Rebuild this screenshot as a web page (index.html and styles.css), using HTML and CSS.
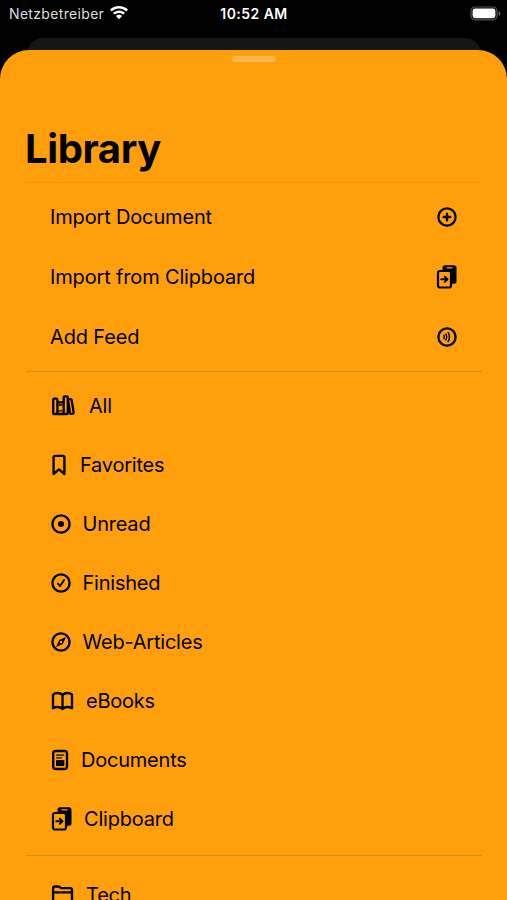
FILE: index.html
```
<!DOCTYPE html>
<html lang="en">
<head>
<meta charset="utf-8">
<title>Library</title>
<link rel="stylesheet" href="styles.css">
</head>
<body>
<svg class="defs" width="0" height="0">
  <symbol id="clip" viewBox="0 0 21 24">
    <rect x="6.500" y=".3" width="14" height="18.400" rx="2.500"/>
    <path d="M11 2.900h5" stroke="#ff9f0c" stroke-width="1.300" stroke-linecap="round"/>
    <rect x="2" y="6" width="13" height="16.500" rx="2" fill="#ff9f0c" stroke="#000" stroke-width="2.200"/>
    <path d="M5.300 14.300h6M8.800 11.700l2.700 2.600-2.700 2.600" class="l18"/>
  </symbol>
</svg>
<header class="status">
  <div class="carrier"><span class="net">Netzbetreiber</span>
    <svg width="18" height="14" viewBox="0 0 18 14" fill="#fff"><path d="M9 0C5.500 0 2.400 1.300 0 3.600l1.700 1.800C3.700 3.500 6.200 2.500 9 2.500s5.300 1 7.300 2.900L18 3.600C15.600 1.300 12.500 0 9 0zM9 4.400c-2.300 0-4.400.9-6 2.400l1.700 1.800C5.900 7.500 7.400 6.900 9 6.900s3.100.6 4.300 1.700L15 6.800c-1.600-1.500-3.700-2.400-6-2.400zM9 8.800c-1.100 0-2.200.5-3 1.200l3 3.200 3-3.200c-.8-.7-1.900-1.200-3-1.200z"/></svg>
  </div>
  <span class="clock">10:52 AM</span>
  <svg class="battery" width="32" height="16" viewBox="0 0 32 16"><rect x="1" y="1" width="26" height="12.800" rx="4" fill="none" stroke="#555" stroke-width="1.200"/><rect x="2.600" y="2.600" width="22.800" height="9.600" rx="2.400" fill="#fff"/><path d="M28.600 5v5q1.800-.8 1.800-2.500T28.600 5z" fill="#666"/></svg>
</header>
<div class="behind"></div>
<main class="sheet">
  <div class="grabber"></div>
  <h1>Library</h1>
  <hr class="faint">
  <ul class="actions">
    <li><span>Import Document</span><svg width="20" height="24" viewBox="0 0 20 24"><circle cx="10" cy="12" r="8.600" class="l2"/><path d="M10 8.700v6.600M6.700 12h6.600" class="l2"/></svg></li>
    <li><span>Import from Clipboard</span><svg width="21" height="24"><use href="#clip"/></svg></li>
    <li><span>Add Feed</span><svg width="20" height="24" viewBox="0 0 20 24"><circle cx="10" cy="12" r="8.600" class="l2"/><path d="M6.900 10.400q.7 1.600 0 3.200M9 9q1.500 3 0 6M11.200 7.500q2.500 4.500 0 9" class="l15"/></svg></li>
  </ul>
  <hr>
  <ul class="menu">
    <li><svg width="26" height="24" viewBox="0 0 26 24"><path d="M2.200 5.700q0-1.100 1.100-1.100h1.800q1.300 0 1.300 1.100V20H3.300q-1.100 0-1.100-1.100zM6.400 8.300h6M6.400 20h6M12.700 3.500q0-1.100 1.100-1.100h1.800q1.200 0 1.200 1.100v15.400q0 1.100-1.200 1.100h-1.800q-1.100 0-1.100-1.100zM17.300 5.400l2.100-.3q1-.2 1.200.8l2 12.500q.2 1-.8 1.200l-1.600.2q-1 .2-1.200-.8L17.300 8" class="l2"/><path d="M7.800 11h3M7.800 16.800h3" class="l13"/></svg><span>All</span></li>
    <li><svg class="mark" width="16" height="24" viewBox="0 0 16 24"><path d="M2.600 21V4.500q0-1.700 1.700-1.700h7.400q1.700 0 1.700 1.700V21L8 16.400z" class="l2"/></svg><span>Favorites</span></li>
    <li class="round"><svg width="20" height="24" viewBox="0 0 20 24"><circle cx="10" cy="12" r="8.600" class="l2"/><circle cx="10" cy="12" r="3"/></svg><span>Unread</span></li>
    <li class="round"><svg width="20" height="24" viewBox="0 0 20 24"><circle cx="10" cy="12" r="8.600" class="l2"/><path d="M6.900 12.600l2.200 2.500 4-6.100" class="l18"/></svg><span>Finished</span></li>
    <li class="round"><svg width="20" height="24" viewBox="0 0 20 24"><circle cx="10" cy="12" r="8.600" class="l2"/><path fill-rule="evenodd" d="M15 7l-3 6.500q-.2.500-.7.700L5 17l3-6.500q.2-.5.700-.7zM10 10.700a1.300 1.300 0 1 0 0 2.600 1.300 1.300 0 0 0 0-2.600z"/></svg><span>Web-Articles</span></li>
    <li class="book"><svg width="23" height="24" viewBox="0 0 23 24"><path d="M11.500 6Q9.800 4 6.700 4T2 5.700v13.500q2-1.200 4.700-1.200t4.800 1.900q2.100-1.900 4.800-1.900t4.700 1.200V5.700Q19.300 4 16.300 4T11.500 6zv13.500" class="l2"/></svg><span>eBooks</span></li>
    <li><svg width="18" height="24" viewBox="0 0 18 24"><rect x="2.200" y="3" width="13.800" height="18" rx="2.400" class="l2"/><path d="M5.700 7.200h7M5.700 9.800h4.800" class="l13"/><rect x="5" y="11.900" width="8.300" height="6.200" rx=".7"/></svg><span>Documents</span></li>
    <li><svg width="21" height="24"><use href="#clip"/></svg><span>Clipboard</span></li>
  </ul>
  <hr>
  <ul class="menu folders">
    <li><svg width="23" height="24" viewBox="0 0 23 24"><path d="M2.100 18V5.500q0-2 2-2h3q.9 0 1.600.6l.6.500q.6.500 1.500.5h8.200q2 0 2 2V18q0 2-2 2H4.100q-2 0-2-2zM2.100 9.400H21" class="l2"/></svg><span>Tech</span></li>
  </ul>
</main>
</body>
</html>
```
FILE: styles.css
```
* { box-sizing: border-box; }
html, body { height: 100%; }
body {
  margin: 0;
  background: #000;
  overflow: hidden;
  font-family: Inter, "Liberation Sans", sans-serif;
  color: #000;
  display: flex;
  flex-direction: column;
}
ul { list-style: none; margin: 0; padding: 0; }
svg { display: block; flex: none; }
.defs { position: absolute; }
.l2, .l18, .l15, .l13 { fill: none; stroke: #000; stroke-linecap: round; stroke-linejoin: round; }
.l2 { stroke-width: 2.350px; }
.l18 { stroke-width: 1.900px; }
.l15 { stroke-width: 1.500px; }
.l13 { stroke-width: 1.300px; }

.status {
  height: 38px;
  flex: none;
  display: grid;
  grid-template-columns: 1fr auto 1fr;
  align-items: start;
  padding: 5px 5px 0 9px;
  color: #fff;
  font-size: 14px;
  line-height: 18px;
}
.carrier { display: flex; gap: 6px; color: #ddd; }
.carrier svg { margin-top: 1px; }
.net { letter-spacing: 0.330px; }
.clock { font-weight: 600; letter-spacing: 0.450px; margin-right: 3px; }
.battery { justify-self: end; margin-top: 1px; }

.behind {
  height: 32px;
  flex: none;
  margin: 0 26px -20px 27px;
  background: #161616;
  border-radius: 16px 16px 0 0;
}
.sheet {
  flex: 1;
  min-height: 0;
  overflow: hidden;
  background: #ff9f0c;
  border-radius: 29px 29px 0 0;
  padding: 0 25px 0 26px;
  position: relative;
}
.grabber {
  width: 44px;
  height: 6px;
  margin: 6px auto 0;
  border-radius: 3px;
  background: #ffb64b;
}
h1 {
  margin: 62px 0 0 -1px;
  height: 58px;
  font-size: 40px;
  line-height: 49px;
  font-weight: 700;
  letter-spacing: -0.400px;
}
hr { border: 0; height: 1px; margin: 0; background: #d58a15; }
.faint { background: #ec9712; margin-right: 2px; }
.actions { padding: 4px 25px 4px 24px; letter-spacing: -0.160px; }
.actions li {
  display: flex;
  align-items: center;
  justify-content: space-between;
  height: 60px;
  font-size: 20px;
}
.menu { padding: 4px 25px 6px; font-size: 20px; letter-spacing: -0.220px; }
.menu li { display: flex; align-items: center; gap: 12px; height: 59.100px; }
.menu .round { gap: 11.500px; }
.menu .mark { margin-right: 1px; }
.folders { padding-top: 10px; }
```
